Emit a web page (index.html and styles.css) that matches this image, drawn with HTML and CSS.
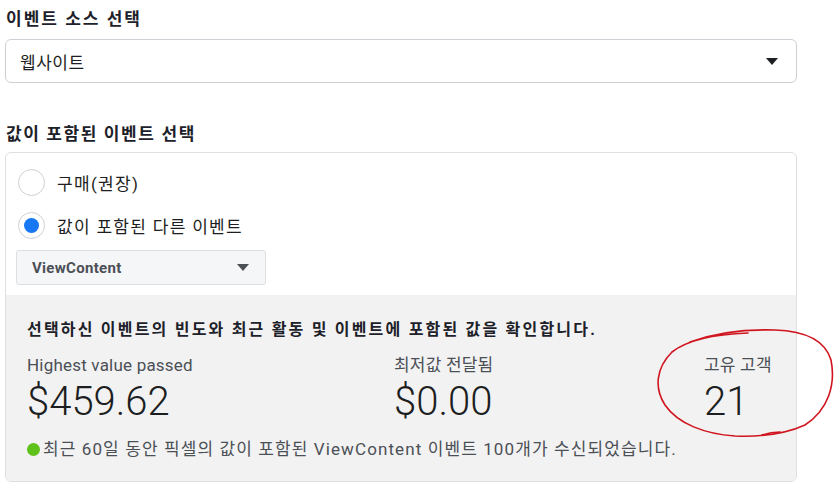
FILE: index.html
```html
<!DOCTYPE html>
<html lang="ko">
<head>
  <meta charset="UTF-8">
  <title>이벤트 소스 선택</title>
  <link rel="stylesheet" href="styles.css">
</head>
<body>

<div class="page">
  <h2 class="label">이벤트 소스 선택</h2>
  <div class="select">
    <span>웹사이트</span>
    <span class="caret"></span>
  </div>

  <h2 class="label second">값이 포함된 이벤트 선택</h2>
  <div class="card">
    <div class="options">
      <div class="radio-row">
        <span class="radio"></span>
        <span>구매(권장)</span>
      </div>
      <div class="radio-row">
        <span class="radio checked"></span>
        <span>값이 포함된 다른 이벤트</span>
      </div>
      <div class="small-select">
        <span>ViewContent</span>
        <span class="caret"></span>
      </div>
    </div>

    <div class="stats">
      <div class="stats-title">선택하신 이벤트의 빈도와 최근 활동 및 이벤트에 포함된 값을 확인합니다.</div>
      <div class="stats-grid">
        <div class="stat">
          <div class="stat-label">Highest value passed</div>
          <div class="stat-value">$459.62</div>
        </div>
        <div class="stat">
          <div class="stat-label">최저값 전달됨</div>
          <div class="stat-value">$0.00</div>
        </div>
        <div class="stat">
          <div class="stat-label">고유 고객</div>
          <div class="stat-value">21</div>
        </div>
      </div>
      <div class="stats-note">
        <span class="dot"></span>
        <span>최근 60일 동안 픽셀의 값이 포함된 ViewContent 이벤트 100개가 수신되었습니다.</span>
      </div>
    </div>
  </div>

  <!-- 빨간 손글씨 동그라미 -->
  <svg class="scribble" width="834" height="493" viewBox="0 0 834 493">
    <path d="M690 342 C 715 333, 745 329, 775 330 C 805 331, 825 340, 831 360 C 836 385, 828 410, 805 425 C 785 434, 760 437, 735 436 C 705 434, 678 424, 665 405 C 654 388, 656 368, 672 352 C 690 338, 720 334, 748 333"
          fill="none" stroke="#d0151f" stroke-width="1.6" stroke-linecap="round"/>
    <path d="M762 435 C 768 433, 774 432, 780 432" fill="none" stroke="#d0151f" stroke-width="1.6" stroke-linecap="round"/>
  </svg>
</div>

</body>
</html>
```

FILE: styles.css
```css
body {
  margin: 0;
  padding: 0;
  background-color: #fff;
  color: #1c1e21;
  font-family: Roboto, "Noto Sans CJK KR", sans-serif;
}

.page {
  position: relative;
  width: 792px;
  padding: 8px 0 0 5px;
}

.label {
  font-size: 17px;
  font-weight: bold;
  letter-spacing: 2px;
  line-height: 22px;
  margin: 0 0 9px 1px;
  color: #1d2129;
}

.label.second {
  margin-top: 40px;
  margin-bottom: 7px;
  letter-spacing: 1.6px;
}

.caret {
  width: 0;
  height: 0;
  border-left: 6px solid transparent;
  border-right: 6px solid transparent;
  border-top: 7px solid #1c1e21;
}

.select {
  height: 42px;
  border: 1px solid #ccd0d5;
  border-radius: 6px;
  padding: 0 18px 0 14px;
  display: flex;
  align-items: center;
  justify-content: space-between;
  font-size: 17px;
  letter-spacing: 0.5px;
  color: #1c1e21;
}

.card {
  border: 1px solid #dddfe2;
  border-radius: 6px;
  overflow: hidden;
}

.options {
  padding: 11px 10px 10px 10px;
}

.radio-row {
  height: 36px;
  display: flex;
  align-items: center;
  gap: 12px;
  font-size: 17px;
  letter-spacing: 1.3px;
  color: #1c1e21;
  margin-bottom: 7px;
}

.radio {
  width: 27px;
  height: 27px;
  margin-left: 2px;
  border: 1px solid #ccd0d5;
  border-radius: 50%;
  box-sizing: border-box;
  display: flex;
  align-items: center;
  justify-content: center;
  background-color: #fff;
}

.radio.checked::after {
  content: "";
  width: 15px;
  height: 15px;
  border-radius: 50%;
  background-color: #1877f2;
}

.small-select {
  width: 250px;
  height: 35px;
  box-sizing: border-box;
  background-color: #f5f6f7;
  border: 1px solid #dddfe2;
  border-radius: 3px;
  padding: 0 16px 0 15px;
  display: flex;
  align-items: center;
  justify-content: space-between;
  font-size: 15px;
  letter-spacing: 0.3px;
  font-weight: bold;
  color: #4b4f56;
}

.small-select .caret {
  border-top-color: #4b4f56;
}

.stats {
  background-color: #f2f2f2;
  padding: 25px 21px 22px 21px;
}

.stats-title {
  font-size: 16px;
  font-weight: bold;
  letter-spacing: 2.2px;
  line-height: 20px;
  color: #1d2129;
}

.stats-grid {
  display: grid;
  grid-template-columns: 367px 310px auto;
  margin-top: 15px;
}

.stat-label {
  font-size: 17px;
  letter-spacing: 0.2px;
  line-height: 20px;
  color: #4b4f56;
}

.stat-value {
  font-size: 40px;
  font-weight: 300;
  line-height: 48px;
  margin-top: 3px;
  color: #1c1e21;
}

.stats-note {
  display: flex;
  align-items: center;
  gap: 3px;
  margin-top: 13px;
  font-size: 17px;
  letter-spacing: 1.1px;
  line-height: 20px;
  color: #4b4f56;
}

.dot {
  width: 13px;
  height: 13px;
  border-radius: 50%;
  background-color: #5ec21a;
}

.scribble {
  position: absolute;
  left: 0;
  top: 0;
  pointer-events: none;
}
```
